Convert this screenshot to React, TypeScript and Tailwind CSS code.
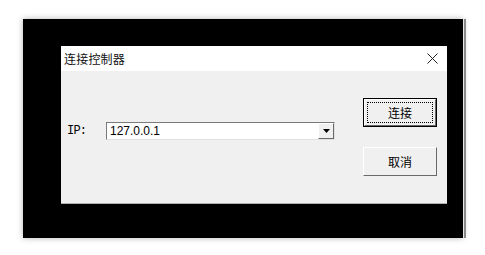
// Connect-controller dialog inside a black frame
export default function App() {
  return (
    <div className="w-[485px] h-[255px] bg-white flex pl-[23px] pt-[19px]" style={{ fontFamily: '"Noto Sans CJK SC", sans-serif' }}>
      <div className="flex items-stretch h-[219px]">
        <div className="w-[440px] h-[219px] bg-black pl-[38px] pt-[27px] shadow-[0_0_6px_rgba(0,0,0,0.3)]">
          <div className="w-[386px] h-[158px] flex flex-col bg-[#f0f0f0] border-b border-[#b0b0b0]">
            {/* title bar */}
            <div className="h-[25px] bg-white flex items-center pl-[3px] pr-[9px]">
              <span className="text-[12px] leading-none text-[#111] tracking-[0.2px]">连接控制器</span>
              <svg className="ml-auto" width="11" height="11" viewBox="0 0 11 11">
                <path d="M0.5 0.5 L10.5 10.5 M10.5 0.5 L0.5 10.5" stroke="#222" strokeWidth="1" fill="none" />
              </svg>
            </div>
            {/* body */}
            <div className="flex items-start flex-1">
              <div className="flex items-center mt-[51px] ml-[6px]">
                <span className="w-[39px] text-[12px] tracking-[-0.8px] text-black" style={{ fontFamily: '"Liberation Mono", monospace' }}>IP:</span>
                <div className="w-[229px] h-[18px] flex bg-white border-t border-l border-[#7a7a7a] border-r border-b border-r-[#e0e0e0] border-b-[#e0e0e0]">
                  <span className="pl-[3px] text-[12px] leading-[16px] text-black" style={{ fontFamily: '"Liberation Sans", sans-serif' }}>127.0.0.1</span>
                  <div className="ml-auto w-[16px] h-[16px] bg-[#f0f0f0] border-t border-l border-white border-r border-b border-r-[#696969] border-b-[#696969] flex items-center justify-center">
                    <svg width="7" height="4" viewBox="0 0 7 4"><path d="M0 0 H7 L3.5 4 Z" fill="#000" /></svg>
                  </div>
                </div>
              </div>
              <div className="flex flex-col gap-[20px] mt-[27px] ml-auto mr-[10px]">
                <div className="w-[74px] h-[29px] border border-black">
                  <div className="w-full h-full bg-[#f0f0f0] border-t border-l border-white border-r border-b border-r-[#696969] border-b-[#696969] p-[2px]">
                    <div className="w-full h-full border border-dotted border-black flex items-center justify-center">
                      <span className="text-[12px] leading-none text-black">连接</span>
                    </div>
                  </div>
                </div>
                <div className="w-[74px] h-[29px] bg-[#f0f0f0] border-t border-l border-white border-r border-b border-r-[#696969] border-b-[#696969] flex items-center justify-center">
                  <span className="text-[12px] leading-none text-black">取消</span>
                </div>
              </div>
            </div>
          </div>
        </div>
        <div className="w-[1px] bg-[#e8e8e8]" />
        <div className="w-[2px] bg-[#8a8a8a]" />
      </div>
    </div>
  );
}
